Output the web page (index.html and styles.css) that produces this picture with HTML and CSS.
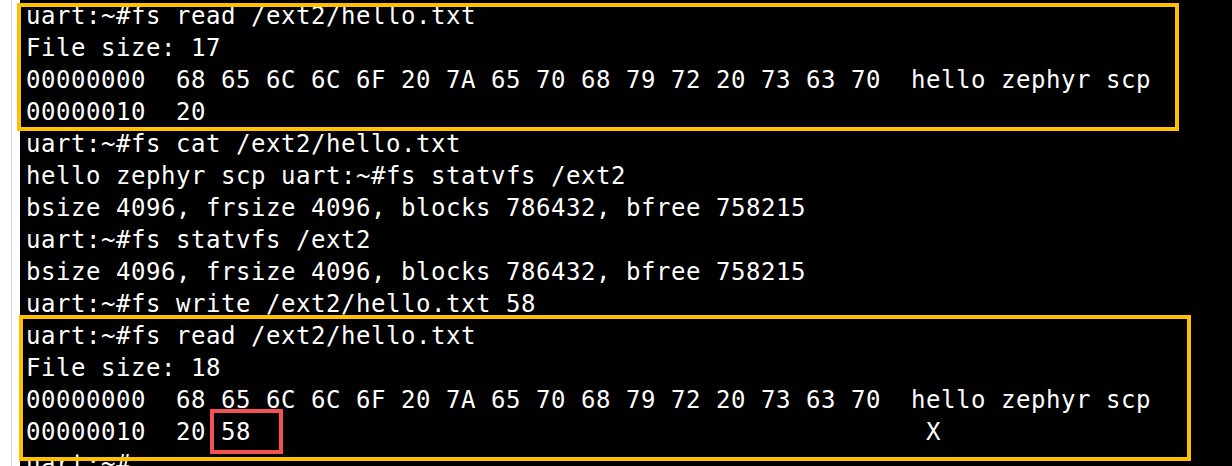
FILE: index.html
```html
<!DOCTYPE html>
<html>
<head>
<meta charset="utf-8">
<link rel="stylesheet" href="styles.css">
</head>
<body>
<div class="page">
  <div class="gutter"></div>
  <div class="rule"></div>
  <div class="gap"></div>
  <div class="terminal">
<pre class="output">uart:~#fs read /ext2/hello.txt
File size: 17
00000000  68 65 6C 6C 6F 20 7A 65 70 68 79 72 20 73 63 70  hello zephyr scp
00000010  20
uart:~#fs cat /ext2/hello.txt
hello zephyr scp uart:~#fs statvfs /ext2
bsize 4096, frsize 4096, blocks 786432, bfree 758215
uart:~#fs statvfs /ext2
bsize 4096, frsize 4096, blocks 786432, bfree 758215
uart:~#fs write /ext2/hello.txt 58
uart:~#fs read /ext2/hello.txt
File size: 18
00000000  68 65 6C 6C 6F 20 7A 65 70 68 79 72 20 73 63 70  hello zephyr scp
00000010  20 58                                             X
uart:~#</pre>
    <div class="mark mark-first"></div>
    <div class="mark mark-second"></div>
    <div class="mark-red"></div>
  </div>
</div>
</body>
</html>
```
FILE: styles.css
```css
html, body {
  margin: 0;
  padding: 0;
  background: #ffffff;
  height: 466px;
  overflow: hidden;
}

.page {
  display: flex;
  height: 466px;
}

.gutter {
  width: 11px;
  flex: none;
}

.rule {
  width: 1px;
  flex: none;
  background: #d4d4d4;
}

.gap {
  width: 8px;
  flex: none;
}

.terminal {
  position: relative;
  flex: 1;
  background: #000000;
  overflow: visible;
  padding-left: 6px;
}

.output {
  margin: 0;
  color: #ffffff;
  font-family: "DejaVu Sans Mono", "Liberation Mono", monospace;
  font-size: 24px;
  letter-spacing: 0.55px;
  line-height: 32px;
  white-space: pre;
  overflow: hidden;
  height: 466px;
}

.mark {
  position: absolute;
  border: 4px solid #ffc000;
  box-sizing: border-box;
}

.mark-first {
  left: -3px;
  top: 3px;
  width: 1162px;
  height: 128px;
}

.mark-second {
  left: -1px;
  top: 315px;
  width: 1172px;
  height: 146px;
}

.mark-red {
  position: absolute;
  left: 190px;
  top: 409px;
  width: 73px;
  height: 45px;
  border: 4px solid #f25252;
  box-sizing: border-box;
}
```
